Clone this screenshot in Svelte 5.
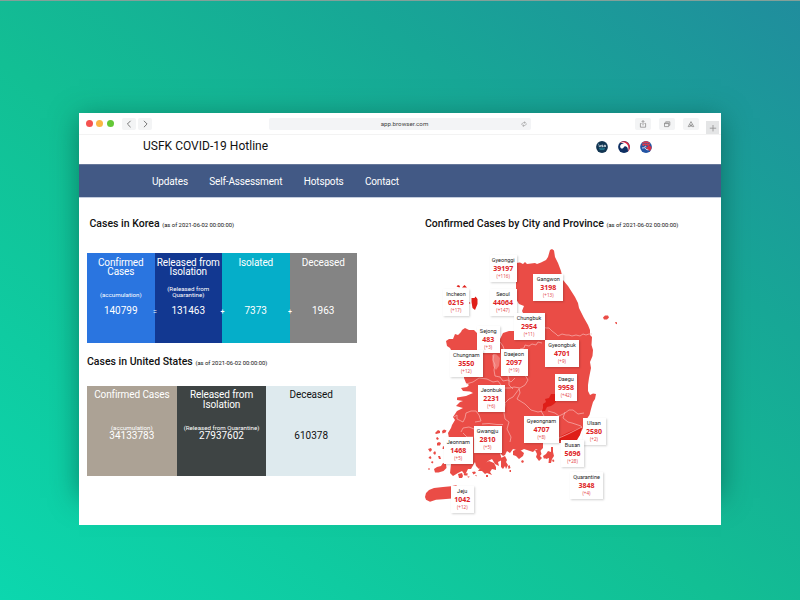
<script>
  const nav = ['Updates', 'Self-Assessment', 'Hotspots', 'Contact'];

  const korea = [
    { title: 'Confirmed Cases', note: '(accumulation)', value: '140799', color: '#2a75e0' },
    { title: 'Released from Isolation', note: '(Released from Quarantine)', value: '131463', color: '#123891', sign: '=' },
    { title: 'Isolated', note: '', value: '7373', color: '#05aec9', sign: '+' },
    { title: 'Deceased', note: '', value: '1963', color: '#848484', sign: '+' }
  ];

  const states = [
    { title: 'Confirmed Cases', note: '(accumulation)', value: '34133783', color: '#aca295' },
    { title: 'Released from Isolation', note: '(Released from Quarantine)', value: '27937602', color: '#3e4444' },
    { title: 'Deceased', note: '', value: '610378', color: '#deeaee', dark: true }
  ];

  // Map canvas origin, in the same units as the outlines below.
  const OX = 415;
  const OY = 240;

  const places = [
    ['Gyeonggi', '39197', '+116', 489.5, 254.5, 27.5],
    ['Gangwon', '3198', '+13', 533.3, 274, 30],
    ['Incheon', '6215', '+17', 443, 289, 26],
    ['Seoul', '44064', '+147', 489.5, 289, 27],
    ['Chungbuk', '2954', '+11', 513.5, 312.3, 31],
    ['Sejong', '483', '+3', 476.5, 326, 23.5],
    ['Gyeongbuk', '4701', '+9', 545, 339.5, 34],
    ['Chungnam', '3550', '+12', 450, 350, 32.5],
    ['Daejeon', '2097', '+19', 500.5, 348.3, 27],
    ['Daegu', '9958', '+42', 555, 373.3, 22],
    ['Jeonbuk', '2231', '+6', 477.5, 385, 27.5],
    ['Gyeongnam', '4707', '+8', 524, 416, 35],
    ['Ulsan', '2580', '+2', 582.5, 417.8, 23],
    ['Gwangju', '2810', '+5', 473.5, 425.5, 28],
    ['Jeonnam', '1468', '+5', 443.5, 437, 29.5],
    ['Busan', '5696', '+28', 561, 440, 23],
    ['Quarantine', '3848', '+4', 570, 472, 33],
    ['Jeju', '1042', '+12', 451, 486, 22.5]
  ];

  const mainland = [
    // north border and east coast
    '516,263 520,262.5 523,264 525,262 527,264 535,263 537,264 541,262.500 546,260 548,257 550,250 552,249 554,250.500 555,257 558,263 561,271 563,280 568,286 575,297 578,303 579,308 584,318 588,325 590,330 590,335 592,337 591.500,345 593,350 592.500,356 590,362 591,368 589,378 588,385 588,391 590,395 593,393.500 596,394 595,399 593,402 591,409 589.500,415 586,420 583,428 579,436 575,440 570,443',
    // south coast
    '543,443 543,448 540,451 536,449 533,452 527,450 524,449 520,451 513,449 510,453 507,451 505,455 503,456 500,453 502,460 498,462 499,466 495,464 492,459 488,461 484,466 479,469 476,466 475,462 471,469 468,469 465,475 462,471 458,473 453,476 450,473 451,464',
    // west coast, going north
    '449,438 448,433 451,428 452,425 455,420 453,417 457,411 463,408 456,406 460,402 463,401 457,400 457,397.500 466,396 473,393 470,391.500 463,391 461,388 467,387 469,385 466,383 464,378 464,376 452,352 450,348 447,346 446,341 449,339 453,339 455,334 458,335 461,332 462,330 465,328 469,330 474,330 477,333 478,352 494,352 500,345 500,339 503,333 509,331 514,331 523,313 522,311 524,306 519,304 516,299'
  ].join(' ');
</script>

<div class="stage">
  <div class="window">
    <div class="toolbar">
      <div class="dots"><i class="r"></i><i class="y"></i><i class="g"></i></div>
      <div class="arrows">
        <span class="btn"><svg viewBox="0 0 14 12"><path d="M8.600 2.800 5.400 6l3.200 3.200" /></svg></span>
        <span class="btn"><svg viewBox="0 0 14 12"><path d="M5.900 2.800 9.100 6 5.900 9.200" /></svg></span>
      </div>
      <div class="address">
        <span>app.browser.com</span>
        <svg viewBox="0 0 8 8"><path d="M1.8 5C1.600 3.300 3 2.300 5.200 2.500M4.400 1.600l1 .9-1.200.9M6.200 3.300C6.400 5 5 5.900 2.800 5.700M3.700 6.700l-1-1 1.200-.9" /></svg>
      </div>
      <div class="tools">
        <span class="tool"><svg viewBox="0 0 16 12"><path d="M6.500 5.500H5.400v3.700h5.200V5.500H9.500M8 7.400V2.700M6.500 4.100 8 2.600l1.500 1.500" /></svg></span>
        <span class="tool"><svg viewBox="0 0 16 12"><path d="M5.500 5h4.200v3.600H5.500zM6.700 4.600V3.800h4.100v3.500H9.900M5.500 5.600h4.200" /></svg></span>
        <span class="tool"><svg viewBox="0 0 16 12"><path d="M8 3.600 10.800 8.600H9.200L8 6.600 6.800 8.600H5.200zM6.600 6.200 8 8.600l1.400-2.400" /></svg></span>
      </div>
      <div class="plus"><svg viewBox="0 0 12 13"><path d="M6.500 4v6.400M3.300 7.200h6.400" /></svg></div>
    </div>

    <header>
      <h1>USFK COVID-19 Hotline</h1>
      <div class="logos">
        <svg viewBox="0 0 12 12">
          <circle cx="6" cy="6" r="5.900" fill="#123552" />
          <path d="M2 3l1.200.7" stroke="#8fc0d6" stroke-width=".7" />
          <path d="M3.200 4.200v1.400h1.300V4.200M7 4.200H5.700v.8H7v.7H5.500M8.100 5.900V4.300h1.400v1.600M8.100 5.200h1.400" fill="none" stroke="#dbe6ec" stroke-width=".8" />
          <path d="M3 7.300h6M3.600 8.600h4.800" stroke="#237d94" stroke-width=".9" />
        </svg>
        <svg viewBox="0 0 12 12">
          <circle cx="6" cy="6" r="5.900" fill="#0e2f62" />
          <path d="M1.800 1.900A5.900 5.900 0 0 1 10 10.400C10.600 8.600 10.300 6.500 9.500 5L6 2z" fill="#dd2541" />
          <path d="M1.800 1.800C3.500 1.100 6.200 1 8.200 2.500 10.600 4.300 11 7.600 9.900 10.500 10.100 8.600 9.800 7 8.900 6 7.700 4.800 6.300 5 5.800 6.200 5.200 7.500 3.900 7.900 2.900 7.200 1.700 6.300 1.900 4.300 3.200 3.300 4.300 2.500 5.800 2.500 6.600 2.700 5 1.700 3.400 1.600 1.800 1.800z" fill="#fff" />
        </svg>
        <svg viewBox="0 0 12 12">
          <circle cx="6" cy="6" r="5.900" fill="#2354a3" />
          <path d="M2 1.700C4.300-.4 7.700-.4 10 1.700L9.700 4H2.300z" fill="#d63d50" />
          <path d="M2.500 2.500h7M1 4.600h4M7 4.600h4" stroke="#405a9f" stroke-width=".9" stroke-dasharray="1.200 .6" />
          <path d="M2.500 4.500h7" stroke="#d73c4b" stroke-width=".9" stroke-dasharray="1.500 1" />
          <path d="M5.800 7 9 4.500l2.400 1.200C11.700 7.400 10.900 9.200 9.800 10z" fill="#d83044" />
          <path d="M2 7l2.800-.3L6 8.300 8.400 9M4.600 5.600l1.700.3" fill="none" stroke="#e8e3ee" stroke-width=".9" />
        </svg>
      </div>
    </header>

    <nav>
      {#each nav as item}<a href="#top">{item}</a>{/each}
    </nav>

    <main>
      <section class="stats">
        <h2 class="first">Cases in Korea <small>(as of 2021-06-02 00:00:00)</small></h2>
        <div class="row korea">
          {#each korea as c}
            <div class="cell" style="background:{c.color}">
              <div class="title">{c.title}</div>
              <div class="note"><span>{c.note}</span></div>
              <div class="value">{c.value}</div>
              {#if c.sign}<b class="sign">{c.sign}</b>{/if}
            </div>
          {/each}
        </div>
        <h2 class="second">Cases in United States <small>(as of 2021-06-02 00:00:00)</small></h2>
        <div class="row us">
          {#each states as c}
            <div class="cell" class:dark={c.dark} style="background:{c.color}">
              <div class="title">{c.title}</div>
              <div class="note"><span>{c.note}</span></div>
              <div class="value">{c.value}</div>
            </div>
          {/each}
        </div>
      </section>

      <section class="regions">
        <h2>Confirmed Cases by City and Province <small>(as of 2021-06-02 00:00:00)</small></h2>
        <div class="map">
          <svg viewBox="415 240 225 280">
            <g fill="#ea4c46">
              <polygon points={mainland} />
              <path d="M425 497l1-4 3-3 5-2 9-1 8-.7 5-1 2 1.300-7 1.500 1 10.500-9 .7-7 .5-6 2-4-2z" />
              <path d="M434 469l3-2 4-1 2-3 3 1 .5 4-3 3-5 1.500-3.500 0zM435 433l3-3 2 1 0 2-4 1zM442 431l2-1.500 2.500 1-1 2-3 1zM437 443l2-1 2 1-1 2.500-3 0zM428 449l3-1 1 2-2 2zM433 453l2-2 1 2-1 2zM429 457l1.500-1 1 2-1 1-2-1zM438 456l2 0 1 3-2 0zM432 461l1.500 1-1 1.500-1.500-1zM436 438l1.500-1 1.500 2-2 1zM443 446l1.500 1 0 2-2 0zM428 469l1-1 1 1-1 1z" />
              <path d="M458 474l4-1 1 3-1 2-3 0zM463.500 474l4-1 0 2.500-3 0zM472 472l3-.5 1 1.500-2.500 1.500zM467.500 476.200l2.500.5-2 1zM475 475l1.500 0 0 1.500zM481 467l4-4 4-2 5 2 2 4 0 3-4-1-2 3 2 3-5-2-2 1-3-3-4 0zM501 458l4-2 2 4-1 2 2 3-2 4-1-3-2 3-2-2 0-4zM508 466l1.500-1 1 3-2 1zM509.500 470l1.500 0 0 2-1.500 0zM486 475l2 0 0 2-2 0z" />
              <path d="M513 451l4-2 3 1 4 3-1 3-4 3-3-3-3-1zM521 461l2-1 1 2-2 1zM535 450l5-1 1.500 5-1.500 2 2 2-3 3-3-4 1-3zM543 456l3-2 2-3 3 1 0-5 2 0 0 5 1 4-2 3-1 4-2.500 0 .5-5-3 1-1-1-1 1zM553 459l1.500 2-1 1-1.500-1z" />
              <path d="M603 317.500l2-2 3 0 1 2-2 2-3 0zM615 322l2 .3 0 2-1.300-.5z" />
            </g>
            <path d="M492 355l4-1 4 4-1 8-3 4-3-4z" fill="#f27a74" />
            <g fill="#df1e18">
              <path d="M471.500 298l3 0 1-1.500 2 2.500 0 5-2.500 6-2.500-2-1-6zM456.500 286.500l1.500-1.500 2 1-.5 1.500zM462 287.500l2.500-2.500 2.500 2.500zM469 302l1.500 1-1 1z" />
              <path d="M542 411l1-3 0-4 3-2-1-3 4-1 2-4 5 0 0 8-2 2-3 2-4 1-2 4z" />
              <path d="M559 441l2-5 8-4 8-3 5-2-2 8-3 5-6 0z" />
            </g>
            <path class="edge" d="M543 327l3 1 3 0 3 3 4 3 2 2 4-2 4 1 3 0 3 1 4-1 4 1 3-2 3 1 3-1 3 0M520 349l4-1 1-3 4 1 3-2 4 1 2-3 4 1M494 354l-1 6 2 5-1 5 1 6 5 1 3 4 5-1 3 2 4-4M508 376l1 4 0 5 4 4M466 384l7-2 6-4 8 1 6 3 5-1 3 4M505 388l5 0 4-1 6 1 5-3 3-5-3-5M519 388l1 5-3 6 8 5 6 6 7 2 4-1M541 411l3 5M548 411l7 2 4 3 6-3 4-3 4 0 5 4 6-1M565 412l-2 6 5 4 4 1 9 3 1 2M559 438l9-4 8-4 6-3M505 404l-1 9 1 6 4 3-2 7 4 8-1 5M519 389l-6 8-4 2-4 4-1 9M454 417l3-2 0 4 6 3 2-4 1-5 5-2 5 0 3 4 2 6-6 1M461 432l2-4 6-1 5 2M463 433l4 4 6 0M482 424l7-.5 8 1 6 0M500 342l3 4 1 3" />
          </svg>
          {#each places as [name, count, delta, x, y, w]}
            <div class="pin" style="left:{x - OX}px;top:{y - OY}px;width:{w}px">
              <span>{name}</span><b>{count}</b><em>({delta})</em>
            </div>
          {/each}
        </div>
      </section>
    </main>
  </div>
</div>

<style>
  :global(body) { margin: 0; }
  .stage {
    box-sizing: border-box; width: 800px; height: 600px; overflow: hidden;
    padding: 112px 79px 0; border-top: 1px solid #83a099;
    background: linear-gradient(to top right, #0cd7ae 0%, #12bf94 45%, #17a796 72%, #208d9d 100%);
    font-family: Roboto, "Liberation Sans", sans-serif; color: #111;
  }
  .window { position: relative; width: 642px; height: 412px; background: #fff; display: flex; flex-direction: column; isolation: isolate; }
  .window::before { content: ''; position: absolute; inset: 4px 4px 36px; z-index: -2; box-shadow: 0 5px 26px 4px rgba(0, 60, 50, .5); }
  .window::after { content: ''; position: absolute; inset: 0; z-index: -1; background: #fff; }
  svg { display: block; }

  .toolbar { height: 21.500px; box-sizing: border-box; border-bottom: 1px solid #f3f3f3; display: flex; align-items: center; padding-left: 6.500px; position: relative; }
  .toolbar svg { fill: none; stroke: #8d8d8d; stroke-width: .8; width: 100%; height: 100%; }
  .dots { display: flex; gap: 3.500px; padding-top: 1px; }
  .dots i { width: 7px; height: 7px; border-radius: 50%; }
  .r { background: #f5524f; }
  .y { background: #fbb744; }
  .g { background: #64c837; }
  .arrows { display: flex; gap: 2.500px; margin-left: 8px; padding-top: 1px; }
  .btn { width: 14px; height: 12px; background: #f3f4f5; border-radius: 2px; }
  .arrows .btn svg { stroke-width: 1; stroke: #777; }
  .address { margin-left: 116.500px; margin-top: 1px; width: 262px; height: 12px; border-radius: 2px; background: #f3f4f6; position: relative; display: flex; align-items: center; justify-content: center; font-size: 6.200px; color: #444; }
  .address span { padding-left: 10px; }
  .address svg { position: absolute; right: 3px; top: 2px; width: 8px; height: 8px; stroke-width: .6; }
  .tools { display: flex; gap: 8px; margin-left: 104px; padding-top: 1px; }
  .tool { width: 16px; height: 12px; border-radius: 2px; background: #f3f4f5; }
  .plus { width: 13px; height: 13px; margin-left: 7.500px; background: #e4e5e6; align-self: flex-end; }

  header { height: 29.500px; display: flex; justify-content: space-between; padding: 0 69px 0 64px; }
  h1 { margin: 4px 0 0; font-size: 12px; line-height: 15px; font-weight: 400; letter-spacing: .02px; }
  .logos { display: flex; gap: 10px; padding-top: 6px; }
  .logos svg { width: 12px; height: 12px; }

  nav { height: 34px; box-sizing: border-box; background: #425985; border-bottom: 1px solid #c3ccdd; border-top: 1px solid #66779a; display: flex; align-items: center; gap: 21.300px; padding: 1.500px 0 0 73px; }
  nav a { color: #fff; text-decoration: none; font-size: 10px; line-height: 14px; letter-spacing: -.14px; }

  main { flex: 1; display: flex; }
  h2 { margin: 0; font-size: 10.500px; line-height: 14px; font-weight: 500; white-space: nowrap; }
  small { font-size: 5.850px; font-weight: 400; }
  .stats { width: 336px; padding-left: 8px; box-sizing: border-box; }
  .first { margin: 18.700px 0 0 2.500px; }
  .second { margin: 12px 0 0; }
  .row { display: flex; height: 90px; }
  .korea { width: 270px; margin-top: 21.300px; }
  .us { width: 269px; margin-top: 16px; }
  .cell { flex: 1 1 0; min-width: 0; position: relative; color: #fff; text-align: center; display: flex; flex-direction: column; }
  .cell.dark { color: #111; }
  .title { height: 30px; flex: none; padding: 5px 1px 0; box-sizing: border-box; font-size: 10px; letter-spacing: -.12px; line-height: 9.500px; }
  .us .title { letter-spacing: -.1px; padding-top: 4.500px; }
  .note { height: 16px; font-size: 6.200px; line-height: 6.500px; display: flex; align-items: flex-end; justify-content: center; }
  .value { font-size: 10px; line-height: 12px; margin-top: 6.500px; }
  .us .note { white-space: nowrap; height: 15.500px; }
  .us .value { margin-top: 0; line-height: 10px; }
  .sign { position: absolute; left: -1.500px; top: 55.500px; font-size: 7px; line-height: 8px; font-weight: 500; }

  .regions { flex: 1; padding: 18.700px 0 0 10px; }
  .map { position: relative; width: 225px; height: 280px; margin: 8.800px 0 0 -10px; }
  .map svg { width: 225px; height: 280px; }
  .edge { fill: none; stroke: #f8b5b1; stroke-width: .7; stroke-linejoin: round; }
  .pin { position: absolute; height: 27px; box-sizing: border-box; padding-top: 2px; background: #fff; box-shadow: .5px 1px 2px rgba(0, 0, 0, .18); display: flex; flex-direction: column; align-items: center; font-family: "Noto Sans", sans-serif; }
  .pin span { font-family: Roboto, sans-serif; font-size: 5.500px; line-height: 7px; color: #222; }
  .pin b { font-size: 7px; line-height: 9px; color: #de2225; font-weight: 700; }
  .pin em { font-size: 4.600px; line-height: 7px; font-style: normal; color: #e54b4d; }
</style>
